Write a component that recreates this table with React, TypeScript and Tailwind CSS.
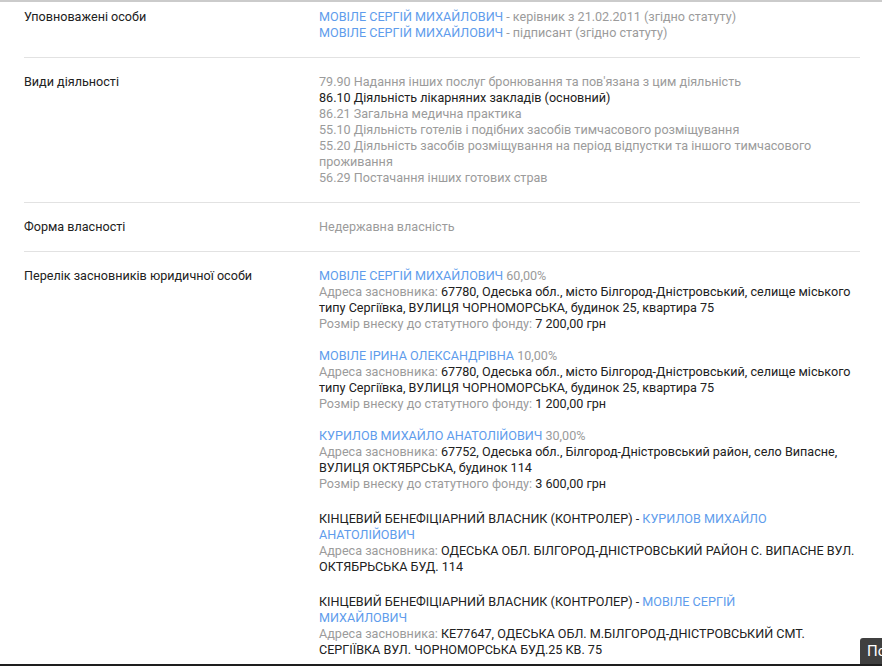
import React from "react";

const blue = "text-[#5e9cec]";
const gray = "text-[#9b9b9b]";

const activities = [
  { text: "79.90 Надання інших послуг бронювання та пов'язана з цим діяльність", main: false },
  { text: "86.10 Діяльність лікарняних закладів (основний)", main: true },
  { text: "86.21 Загальна медична практика", main: false },
  { text: "55.10 Діяльність готелів і подібних засобів тимчасового розміщування", main: false },
  { text: "55.20 Діяльність засобів розміщування на період відпустки та іншого тимчасового проживання", main: false },
  { text: "56.29 Постачання інших готових страв", main: false },
];

const founders = [
  {
    name: "МОВІЛЕ СЕРГІЙ МИХАЙЛОВИЧ",
    share: "60,00%",
    address: ["67780, Одеська обл., місто Білгород-Дністровський, селище міського", "типу Сергіївка, ВУЛИЦЯ ЧОРНОМОРСЬКА, будинок 25, квартира 75"],
    fund: "7 200,00 грн",
  },
  {
    name: "МОВІЛЕ ІРИНА ОЛЕКСАНДРІВНА",
    share: "10,00%",
    address: ["67780, Одеська обл., місто Білгород-Дністровський, селище міського", "типу Сергіївка, ВУЛИЦЯ ЧОРНОМОРСЬКА, будинок 25, квартира 75"],
    fund: "1 200,00 грн",
  },
  {
    name: "КУРИЛОВ МИХАЙЛО АНАТОЛІЙОВИЧ",
    share: "30,00%",
    address: ["67752, Одеська обл., Білгород-Дністровський район, село Випасне,", "ВУЛИЦЯ ОКТЯБРСЬКА, будинок 114"],
    fund: "3 600,00 грн",
  },
];

const owners = [
  {
    name: ["КУРИЛОВ МИХАЙЛО", "АНАТОЛІЙОВИЧ"],
    address: ["ОДЕСЬКА ОБЛ. БІЛГОРОД-ДНІСТРОВСЬКИЙ РАЙОН С. ВИПАСНЕ ВУЛ.", "ОКТЯБРЬСЬКА БУД. 114"],
  },
  {
    name: ["МОВІЛЕ СЕРГІЙ", "МИХАЙЛОВИЧ"],
    address: ["КЕ77647, ОДЕСЬКА ОБЛ. М.БІЛГОРОД-ДНІСТРОВСЬКИЙ СМТ.", "СЕРГІЇВКА ВУЛ. ЧОРНОМОРСЬКА БУД.25 КВ. 75"],
  },
];

function Row({ label, children, className = "py-4" }: { label: string; children: React.ReactNode; className?: string }) {
  return (
    <div className={`flex border-b border-[#e2e2e2] ${className}`}>
      <div className="w-[295px] shrink-0 text-[#212121]">{label}</div>
      <div className="flex-1 min-w-0">{children}</div>
    </div>
  );
}

export default function App() {
  return (
    <div className="min-h-screen bg-white border-t-2 border-[#cbcbcb] font-['Roboto',sans-serif] text-[12.6px] leading-4 text-[#212121]">
      <div className="pl-6 pr-[22px]">
        <Row label="Уповноважені особи" className="pt-[7px] pb-4">
          <div>
            <span className={blue}>МОВІЛЕ СЕРГІЙ МИХАЙЛОВИЧ</span>
            <span className={gray}> - керівник з 21.02.2011 (згідно статуту)</span>
          </div>
          <div>
            <span className={blue}>МОВІЛЕ СЕРГІЙ МИХАЙЛОВИЧ</span>
            <span className={gray}> - підписант (згідно статуту)</span>
          </div>
        </Row>

        <Row label="Види діяльності">
          <div className="max-w-[520px]">
            {activities.map((a) => (
              <div key={a.text} className={a.main ? "text-[#212121]" : gray}>
                {a.text}
              </div>
            ))}
          </div>
        </Row>

        <Row label="Форма власності">
          <div className={gray}>Недержавна власність</div>
        </Row>

        <Row label="Перелік засновників юридичної особи" className="pt-4 pb-8 border-b-0">
          {founders.map((f) => (
            <div key={f.name} className="mb-4 whitespace-nowrap">
              <div>
                <span className={blue}>{f.name}</span> <span className={gray}>{f.share}</span>
              </div>
              <div>
                <span className={gray}>Адреса засновника: </span>
                {f.address[0]}
                <br />
                {f.address[1]}
              </div>
              <div>
                <span className={gray}>Розмір внеску до статутного фонду: </span>
                {f.fund}
              </div>
            </div>
          ))}
          {owners.map((o) => (
            <div key={o.name[1]} className="mt-[19px] whitespace-nowrap">
              <div>
                КІНЦЕВИЙ БЕНЕФІЦІАРНИЙ ВЛАСНИК (КОНТРОЛЕР) - <span className={blue}>{o.name[0]}</span>
                <br />
                <span className={blue}>{o.name[1]}</span>
              </div>
              <div>
                <span className={gray}>Адреса засновника: </span>
                {o.address[0]}
                <br />
                {o.address[1]}
              </div>
            </div>
          ))}
        </Row>
      </div>

      <button className="fixed right-0 bottom-[2px] h-[26px] w-[22px] overflow-hidden rounded-tl-[3px] bg-[#404040] pl-[7px] text-left text-[15px] leading-[26px] text-white whitespace-nowrap">
        Повідомити
      </button>
      <div className="fixed bottom-0 left-0 right-0 h-[2px] bg-[#1e1e1e]" />
    </div>
  );
}
